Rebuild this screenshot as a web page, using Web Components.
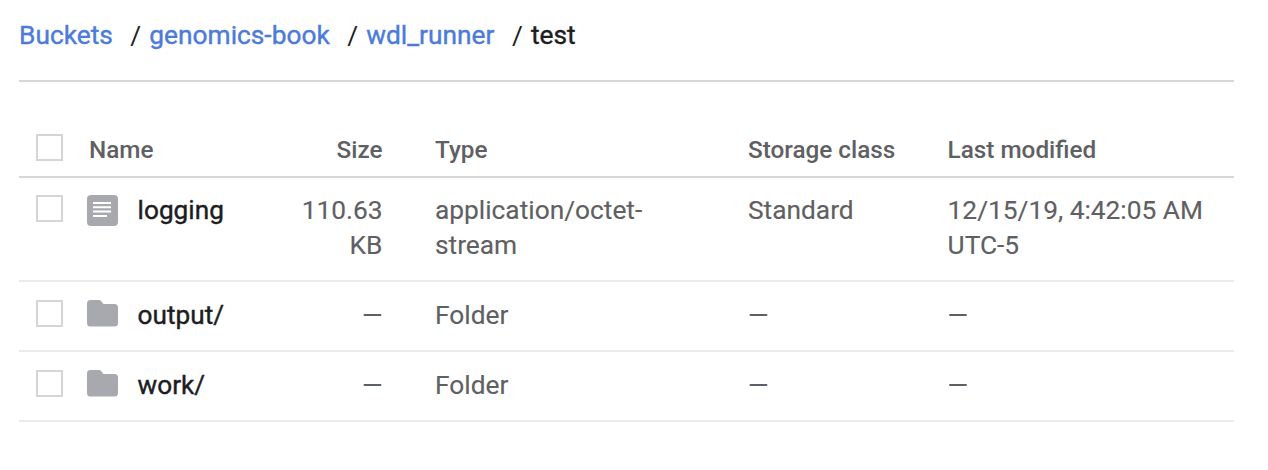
<!DOCTYPE html>
<html lang="en">
<head>
<meta charset="utf-8">
<title>Bucket browser</title>
<style>
body { margin: 0; background: #fff; font-family: Roboto, sans-serif; }
</style>
</head>
<body>
<bucket-browser>
  <crumb-trail slot="path">
    <crumb-item link>Buckets</crumb-item>
    <crumb-item link>genomics-book</crumb-item>
    <crumb-item link>wdl_runner</crumb-item>
    <crumb-item>test</crumb-item>
  </crumb-trail>
  <object-header>
    <span slot="name">Name</span><span slot="size">Size</span><span slot="type">Type</span><span slot="storage">Storage class</span><span slot="modified">Last modified</span>
  </object-header>
  <object-row kind="file" class="first">
    <span slot="name">logging</span><span slot="size">110.63 KB</span><span slot="type">application/octet-stream</span><span slot="storage">Standard</span><span slot="modified">12/15/19, 4:42:05 AM UTC-5</span>
  </object-row>
  <object-row kind="folder">
    <span slot="name">output/</span><span slot="size">—</span><span slot="type">Folder</span><span slot="storage">—</span><span slot="modified">—</span>
  </object-row>
  <object-row kind="folder">
    <span slot="name">work/</span><span slot="size">—</span><span slot="type">Folder</span><span slot="storage">—</span><span slot="modified">—</span>
  </object-row>
</bucket-browser>
<script>
class BaseElement extends HTMLElement {
  connectedCallback() {
    if (!this.shadowRoot) this.attachShadow({ mode: 'open' }).innerHTML = this.view();
  }
}

customElements.define('bucket-browser', class extends BaseElement {
  view() {
    return `<style>
      :host { display: block; box-sizing: border-box; width: 1268px; height: 470px; padding: 0 34px 0 19px; overflow: hidden; }
    </style><slot name="path"></slot><slot></slot>`;
  }
});

customElements.define('crumb-trail', class extends BaseElement {
  view() {
    return `<style>
      :host { display: flex; box-sizing: border-box; height: 82px; padding-top: 18px; border-bottom: 2px solid #d6d7da; }
    </style><slot></slot>`;
  }
});

customElements.define('crumb-item', class extends BaseElement {
  view() {
    return `<style>
      :host { display: flex; font-size: 26.3px; line-height: 35px; color: #1d1d1f; white-space: nowrap; -webkit-text-stroke: 0.4px currentColor; }
      :host([link]) { color: #4c7bd9; }
      .sep { width: 36.5px; box-sizing: border-box; padding-left: 17.5px; color: #1d1d1f; -webkit-text-stroke: 0; }
    </style><slot></slot>${this.hasAttribute('link') ? '<span class="sep">/</span>' : ''}`;
  }
});

customElements.define('check-box', class extends BaseElement {
  view() {
    return `<style>
      :host { display: block; box-sizing: border-box; width: 27px; height: 27px; border: 2px solid #d4d5d9; background: #fff; }
    </style>`;
  }
});

customElements.define('object-icon', class extends BaseElement {
  view() {
    const file = `<svg width="31" height="31" viewBox="0 0 31 31"><rect width="31" height="31" rx="4" fill="#a7a9af"/><path d="M6 8h18M6 12.3h18M6 16.6h18M6 21h14" stroke="#fff" stroke-width="2"/></svg>`;
    const folder = `<svg width="31" height="27" viewBox="0 0 31 27"><path d="M3.5 0h8.2c1 0 1.8.4 2.4 1.1L16.5 4H27.5A3.5 3.5 0 0 1 31 7.5V23a3.5 3.5 0 0 1-3.5 3.5h-24A3.5 3.5 0 0 1 0 23V3.500A3.5 3.5 0 0 1 3.500 0z" fill="#a7a9af"/></svg>`;
    return `<style>:host { display: block; } svg { display: block; }</style>${this.getAttribute('kind') === 'file' ? file : folder}`;
  }
});

const columns = 'grid-template-columns: 68px 50.6px 133.4px 111.5px 52.5px 313px 199.600px 1fr;';

customElements.define('object-header', class extends BaseElement {
  view() {
    return `<style>
      :host { display: grid; ${columns} box-sizing: border-box; height: 96px; padding-top: 50px; border-bottom: 2px solid #d6d7da;
        font-size: 24.3px; line-height: 35px; font-weight: 500; color: #5f6063; }
      check-box { margin: 2px 0 0 17px; }
      .name { grid-column: 2 / 4; padding-left: 2px; }
      .size { text-align: right; }
      .type { grid-column: 6; }
    </style>
    <check-box></check-box>
    <div class="name"><slot name="name"></slot></div>
    <div class="size"><slot name="size"></slot></div>
    <div class="type"><slot name="type"></slot></div>
    <div><slot name="storage"></slot></div>
    <div><slot name="modified"></slot></div>`;
  }
});

customElements.define('object-row', class extends BaseElement {
  view() {
    return `<style>
      :host { display: grid; ${columns} align-items: start; box-sizing: border-box; height: 70px; padding-top: 16px; border-bottom: 2px solid #ebebed;
        font-size: 26.3px; line-height: 35px; color: #5f6063; -webkit-text-stroke: 0.15px currentColor; }
      :host(.first) { height: 104px; padding-top: 15px; }
      check-box { margin: 2px 0 0 17px; }
      object-icon { margin: 2px 0 0; }
      .name { font-size: 26.2px; color: #1d1d1f; -webkit-text-stroke: 0.4px currentColor; }
      .size { text-align: right; padding-left: 19px; }
      .type { grid-column: 6; width: 230px; }
    </style>
    <check-box></check-box>
    <object-icon kind="${this.getAttribute('kind')}"></object-icon>
    <div class="name"><slot name="name"></slot></div>
    <div class="size"><slot name="size"></slot></div>
    <div class="type"><slot name="type"></slot></div>
    <div><slot name="storage"></slot></div>
    <div><slot name="modified"></slot></div>`;
  }
});
</script>
</body>
</html>
